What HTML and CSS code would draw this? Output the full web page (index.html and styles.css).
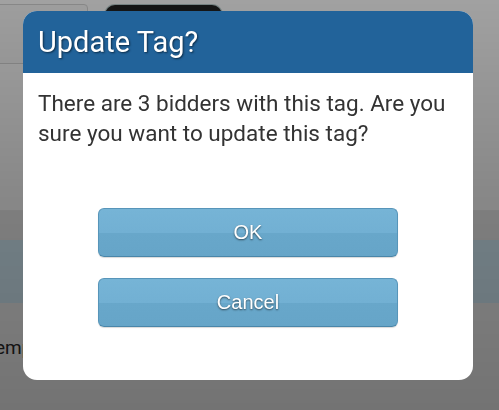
FILE: index.html
```html
<!DOCTYPE html>
<html>
<head>
<meta charset="utf-8">
<link rel="stylesheet" href="styles.css">
</head>
<body>
<div class="page">
  <div class="topbar">
    <div class="box"></div>
    <div class="darkbtn"></div>
  </div>
  <div class="section"></div>
  <div class="subsection"></div>
  <div class="band"></div>
  <div class="row"><span class="rowtext">empty</span></div>
</div>
<div class="overlay"></div>
<div class="modal">
  <div class="modal-header"><h1 class="modal-title">Update Tag?</h1></div>
  <div class="modal-body">
    <p class="message">There are 3 bidders with this tag. Are you sure you want to update this tag?</p>
    <div class="actions">
      <button class="btn">OK</button>
      <button class="btn">Cancel</button>
    </div>
  </div>
</div>
</body>
</html>
```
FILE: styles.css
```css
html, body {
  margin: 0;
  padding: 0;
  width: 499px;
  height: 410px;
  overflow: hidden;
  background: #f4f4f4;
}
.page {
  display: flex;
  flex-direction: column;
  height: 410px;
  font-family: Roboto, "Liberation Sans", sans-serif;
}
.topbar {
  display: flex;
  align-items: flex-start;
  height: 64px;
  background: #ffffff;
}
.box {
  width: 90px;
  height: 58px;
  margin-top: 4px;
  margin-left: -4px;
  border: 1px solid #d8d8d8;
  border-radius: 4px;
  background: #fafafa;
}
.darkbtn {
  width: 117px;
  height: 34px;
  margin-left: 17px;
  margin-top: 5px;
  border-radius: 10px;
  background: #222;
  box-shadow: 0 0 0 1px #bcd0d0;
}
.section {
  height: 146px;
  background: #ffffff;
}
.subsection {
  height: 30px;
  background: #eeeeee;
}
.band {
  height: 63px;
  background: #d7effc;
}
.row {
  flex: 1;
  background: #f4f4f4;
  padding-top: 33px;
}
.rowtext {
  display: block;
  margin-left: -5px;
  font-size: 19px;
  color: #2a2a2a;
  white-space: nowrap;
}
.overlay {
  position: fixed;
  inset: 0;
  background: linear-gradient(rgba(0,0,0,0.37) 0px, rgba(0,0,0,0.465) 190px, rgba(0,0,0,0.53) 410px);
}
.modal {
  position: absolute;
  left: 23px;
  top: 11px;
  width: 450px;
  height: 369px;
  border-radius: 14px;
  overflow: hidden;
  background: #ffffff;
  font-family: Roboto, "Liberation Sans", sans-serif;
}
.modal-header {
  height: 62px;
  background: #22639a;
  display: flex;
  align-items: center;
  padding: 0 15px;
}
.modal-title {
  margin: 0;
  font-size: 29px;
  font-weight: 400;
  color: #ffffff;
  text-shadow: 1px 1px 2px #0c2c48;
}
.modal-body {
  padding: 15px 15px 0;
}
.message {
  margin: 0;
  font-size: 22.5px;
  line-height: 30px;
  color: #333333;
}
.actions {
  display: flex;
  flex-direction: column;
  align-items: center;
  gap: 21px;
  margin-top: 60px;
}
.btn {
  width: 300px;
  height: 49px;
  border: 1px solid #5795b9;
  border-bottom-color: #4a86a9;
  border-radius: 6px;
  background: linear-gradient(#76b4d6 0%, #72b0d3 50%, #68a7ca 51%, #66a5c8 100%);
  color: #ffffff;
  font-family: "Liberation Sans", Arial, sans-serif;
  font-size: 20px;
  text-shadow: 0 1px 2px rgba(0,0,0,0.6);
  box-shadow: 0 1px 1px rgba(0,0,0,0.15);
  padding: 0;
}
```
